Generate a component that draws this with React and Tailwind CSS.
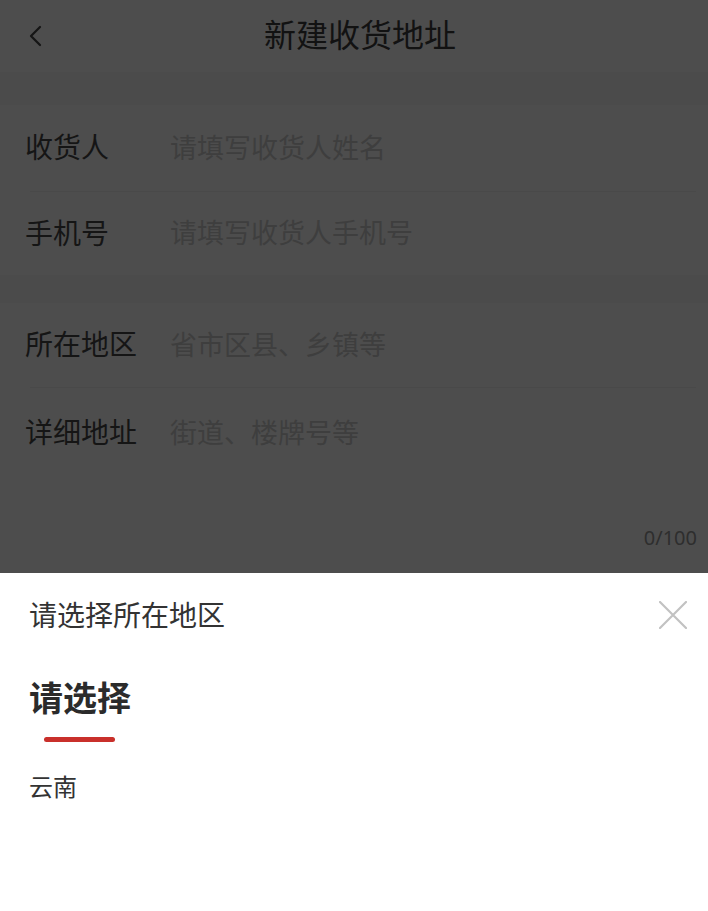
import React from "react";

const font = { fontFamily: '"Noto Sans CJK SC", "Noto Sans", sans-serif' };

function Row({ label, placeholder, h }) {
  return (
    <div className={`flex items-center ${h} pl-[25px] pb-[4px]`}>
      <div className="w-[145px] text-[28px] leading-none text-[#151515]">{label}</div>
      <div className="text-[27px] leading-none text-[#3e3e3e]">{placeholder}</div>
    </div>
  );
}

export default function App() {
  return (
    <div className="w-[708px] h-[911px] flex flex-col bg-[#4b4b4b] overflow-hidden" style={font}>
      <div className="h-[72px] bg-[#4d4d4d] flex items-center px-[26px]">
        <svg width="22" height="26" viewBox="0 0 22 26" className="shrink-0">
          <path d="M14 4 L5 13 L14 22" fill="none" stroke="#151515" strokeWidth="2.2" strokeLinecap="round" strokeLinejoin="round" />
        </svg>
        <div className="flex-1 text-center text-[32px] leading-none text-[#121212] pr-[10px] -mt-[6px]">新建收货地址</div>
      </div>
      <div className="h-[33px]" />
      <div className="bg-[#4d4d4d] flex flex-col">
        <Row label="收货人" placeholder="请填写收货人姓名" h="h-[86px]" />
        <div className="h-px bg-[#494949] ml-[30px] mr-[12px]" />
        <Row label="手机号" placeholder="请填写收货人手机号" h="h-[83px]" />
      </div>
      <div className="h-[28px]" />
      <div className="bg-[#4d4d4d] flex flex-col flex-1">
        <Row label="所在地区" placeholder="省市区县、乡镇等" h="h-[84px]" />
        <div className="h-px bg-[#494949] ml-[30px] mr-[12px]" />
        <Row label="详细地址" placeholder="街道、楼牌号等" h="h-[90px]" />
        <div className="flex-1 flex items-end justify-end pr-[11px] pb-[21px]">
          <span className="text-[20px] leading-[28px] text-[#2e2e2e]" style={{ fontFamily: '"Noto Sans", sans-serif' }}>0/100</span>
        </div>
      </div>
      <div className="h-[338px] bg-white flex flex-col shrink-0">
        <div className="flex items-center justify-between pt-[23px] pl-[29px] pr-[21px]">
          <span className="text-[28px] leading-[40px] text-[#333333] -mt-[2px]">请选择所在地区</span>
          <svg width="28" height="28" viewBox="0 0 28 28">
            <path d="M1 1 L27 27 M27 1 L1 27" stroke="#c2c2c2" strokeWidth="2.2" strokeLinecap="round" />
          </svg>
        </div>
        <div className="pl-[29px] mt-[41px]">
          <div className="text-[34px] leading-[44px] font-bold text-[#2b2b2b]">请选择</div>
          <div className="ml-[15px] mt-[18px] w-[71px] h-[5px] rounded-full bg-[#c9302b]" />
          <div className="mt-[28px] text-[24px] leading-[32px] text-[#333333]">云南</div>
        </div>
      </div>
    </div>
  );
}
